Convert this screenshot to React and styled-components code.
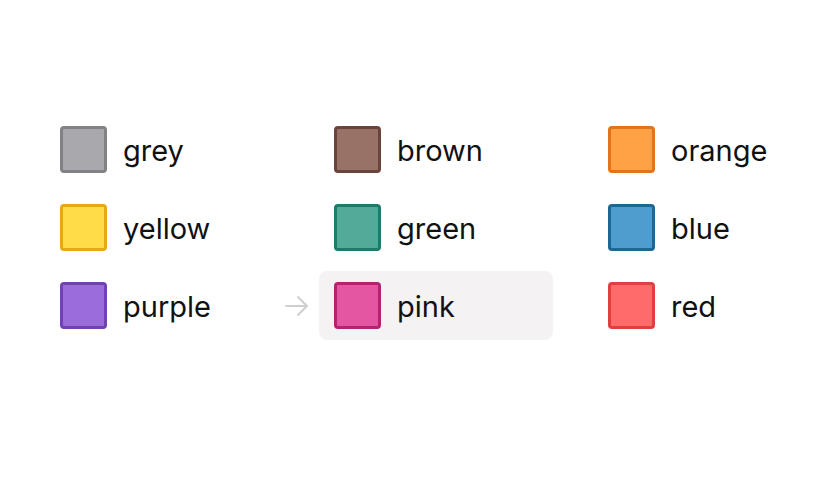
import styled, { createGlobalStyle } from "styled-components";

const GlobalStyle = createGlobalStyle`
  body {
    margin: 0;
    background: #ffffff;
    font-family: Inter, "Noto Sans", sans-serif;
  }
`;

const Page = styled.div`
  width: 840px;
  height: 480px;
  padding: 115px 0 0 45px;
  box-sizing: border-box;
`;

const Grid = styled.div`
  display: grid;
  grid-template-columns: repeat(3, 234px);
  column-gap: 40px;
  row-gap: 9px;
`;

const Cell = styled.div`
  position: relative;
  display: flex;
  align-items: center;
  gap: 16px;
  height: 69px;
  padding: 0 15px;
  border-radius: 8px;
  background: ${({ $active }) => ($active ? "#f4f2f3" : "transparent")};
`;

const Swatch = styled.div`
  width: 47px;
  height: 47px;
  box-sizing: border-box;
  border-radius: 4px;
  border: 3px solid ${({ $border }) => $border};
  background: ${({ $fill }) => $fill};
  flex-shrink: 0;
`;

const Label = styled.span`
  font-size: 29px;
  color: #111111;
  padding-top: 1px;
`;

const Arrow = styled.svg`
  position: absolute;
  left: -35px;
  top: 50%;
  transform: translateY(-50%);
`;

const colors = [
  { name: "grey", fill: "#a9a9ad", border: "#828285" },
  { name: "brown", fill: "#987267", border: "#6a443a" },
  { name: "orange", fill: "#ffa246", border: "#e2751c" },
  { name: "yellow", fill: "#ffdc48", border: "#e5a912" },
  { name: "green", fill: "#53aa98", border: "#1f7a6a" },
  { name: "blue", fill: "#4f9ccf", border: "#1d6794" },
  { name: "purple", fill: "#9b6cdb", border: "#7143b0" },
  { name: "pink", fill: "#e556a0", border: "#b3236f", active: true },
  { name: "red", fill: "#ff6b6b", border: "#e03f3f" },
];

export default function App() {
  return (
    <>
      <GlobalStyle />
      <Page>
        <Grid>
          {colors.map((c) => (
            <Cell key={c.name} $active={c.active}>
              {c.active && (
                <Arrow width="26" height="22" viewBox="0 0 26 22" fill="none">
                  <path
                    d="M2 11H23M14 2L23 11L14 20"
                    stroke="#cfcfcf"
                    strokeWidth="2"
                    strokeLinecap="round"
                    strokeLinejoin="round"
                  />
                </Arrow>
              )}
              <Swatch $fill={c.fill} $border={c.border} />
              <Label>{c.name}</Label>
            </Cell>
          ))}
        </Grid>
      </Page>
    </>
  );
}
